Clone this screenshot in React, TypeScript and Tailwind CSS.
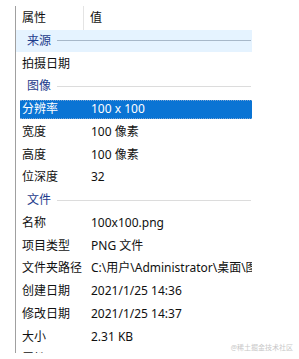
import React from 'react';

type Row =
  | { kind: 'group'; label: string; hover?: boolean }
  | { kind: 'item'; label: string; value?: string; selected?: boolean };

const ROWS: Row[] = [
  { kind: 'group', label: '来源', hover: true },
  { kind: 'item', label: '拍摄日期' },
  { kind: 'group', label: '图像' },
  { kind: 'item', label: '分辨率', value: '100 x 100', selected: true },
  { kind: 'item', label: '宽度', value: '100 像素' },
  { kind: 'item', label: '高度', value: '100 像素' },
  { kind: 'item', label: '位深度', value: '32' },
  { kind: 'group', label: '文件' },
  { kind: 'item', label: '名称', value: '100x100.png' },
  { kind: 'item', label: '项目类型', value: 'PNG 文件' },
  { kind: 'item', label: '文件夹路径', value: 'C:\\用户\\Administrator\\桌面\\图片' },
  { kind: 'item', label: '创建日期', value: '2021/1/25 14:36' },
  { kind: 'item', label: '修改日期', value: '2021/1/25 14:37' },
  { kind: 'item', label: '大小', value: '2.31 KB' },
  { kind: 'item', label: '属性', value: 'A' },
];

function GroupRow({ label, hover }: { label: string; hover?: boolean }) {
  return (
    <div className={`flex h-[22.75px] items-center pl-[11px] pr-px ${hover ? 'bg-[#e5f3ff]' : ''}`}>
      <span className="text-[#1e3c8c]">{label}</span>
      <div className={`ml-[6px] h-px flex-1 ${hover ? 'bg-[#a7b8c9]' : 'bg-[#dcdcdc]'}`} />
    </div>
  );
}

function ItemRow({ label, value, selected }: { label: string; value?: string; selected?: boolean }) {
  if (selected) {
    return (
      <div className="flex h-[22.75px] items-center pl-[4px]">
        <div className="flex h-[19px] flex-1 items-center border-y border-dotted border-[#7aa6d6] bg-[#0a74d4] pl-[2px] text-white">
          <span className="w-[69px] shrink-0">{label}</span>
          <span className="whitespace-nowrap">{value}</span>
        </div>
      </div>
    );
  }
  return (
    <div className="flex h-[22.75px] items-center pl-[6px] text-[#111]">
      <span className="w-[69px] shrink-0 whitespace-nowrap">{label}</span>
      <span className="whitespace-nowrap">{value}</span>
    </div>
  );
}

export default function App() {
  return (
    <div
      className="relative h-[359px] w-[299px] overflow-hidden bg-white text-[12px] leading-none"
      style={{ fontFamily: '"Noto Sans", "Noto Sans CJK SC", sans-serif' }}
    >
      <div className="ml-[15px] mt-[6px] h-[347px] w-[237px] overflow-hidden border-l border-[#a0a0a0]">
        {/* header */}
        <div className="flex h-[23.5px] items-center text-[#111]">
          <span className="w-[67px] pl-[6px]">属性</span>
          <div className="h-full w-px bg-[#e4e4e4]" />
          <span className="pl-[6px]">值</span>
        </div>
        {ROWS.map((r, i) =>
          r.kind === 'group' ? (
            <GroupRow key={i} label={r.label} hover={r.hover} />
          ) : (
            <ItemRow key={i} label={r.label} value={r.value} selected={r.selected} />
          )
        )}
      </div>
      <div className="absolute bottom-[8px] right-[6px] text-[7px] text-[#c8c8c8]">@稀土掘金技术社区</div>
    </div>
  );
}
